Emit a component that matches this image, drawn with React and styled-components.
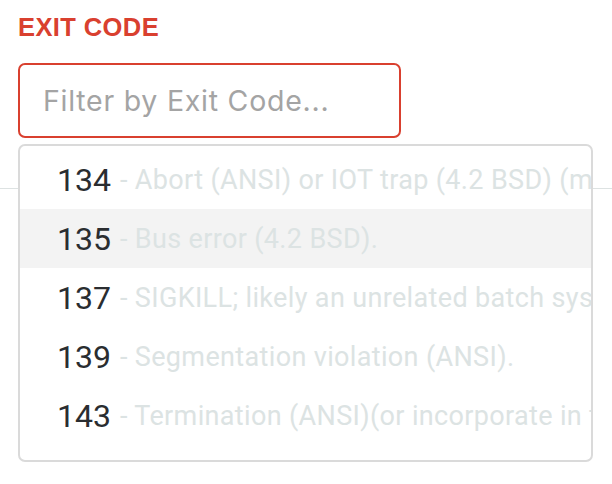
import React from "react";
import styled, { createGlobalStyle } from "styled-components";

const Global = createGlobalStyle`
  html, body { margin: 0; padding: 0; background: #ffffff; }
  body { font-family: "Liberation Sans", Arial, sans-serif; }
  * { box-sizing: border-box; }
`;

const Page = styled.div`
  width: 612px;
  height: 484px;
  overflow: hidden;
  background: #ffffff;
`;

const Field = styled.div`
  display: flex;
  flex-direction: column;
  padding: 12px 0 0 18px;
`;

const Label = styled.label`
  font-family: "Liberation Sans", Arial, sans-serif;
  font-weight: 700;
  font-size: 25.5px;
  line-height: 30px;
  letter-spacing: 0.4px;
  color: #d9402f;
  margin: 0 0 21px 0;
`;

const InputWrap = styled.div`
  position: relative;
  width: 383px;
`;

const Input = styled.input`
  display: block;
  width: 383px;
  height: 75px;
  border: 2px solid #d9402f;
  border-radius: 7px;
  padding: 0 0 0 23px;
  font-family: Inter, "Open Sans", sans-serif;
  font-size: 28.5px;
  letter-spacing: 0.75px;
  color: #333333;
  background: #ffffff;
  outline: none;
  &::placeholder { color: #a4a4a4; }
`;

const Menu = styled.ul`
  position: absolute;
  top: calc(100% + 6px);
  left: 0;
  width: 575px;
  height: 318px;
  margin: 0;
  padding: 4px 0 0 0;
  list-style: none;
  background: #ffffff;
  border: 2px solid #dadada;
  border-radius: 7px;
  overflow: hidden;
  z-index: 2;
`;

const Item = styled.li`
  display: flex;
  align-items: center;
  height: 59px;
  padding: 0 0 0 37px;
  background: ${(p) => (p.$active ? "#f3f3f3" : "transparent")};
  white-space: nowrap;
  overflow: hidden;
  font-family: Roboto, "Liberation Sans", sans-serif;
`;

const Code = styled.span`
  font-size: 32px;
  color: #2a2d30;
  flex: none;
`;

const Desc = styled.span`
  font-size: 27px;
  letter-spacing: 0.35px;
  color: #dce3e3;
  margin-left: 9px;
  flex: none;
`;

const Divider = styled.hr`
  margin: 50px 0 0 0;
  border: 0;
  height: 1px;
  background: #dde2e2;
`;

const codes = [
  { code: "134", desc: "- Abort (ANSI) or IOT trap (4.2 BSD) (most likely a crash)." },
  { code: "135", desc: "- Bus error (4.2 BSD).", active: true },
  { code: "137", desc: "- SIGKILL; likely an unrelated batch system job." },
  { code: "139", desc: "- Segmentation violation (ANSI)." },
  { code: "143", desc: "- Termination (ANSI)(or incorporate in the job)." },
];

export default function App() {
  return (
    <Page>
      <Global />
      <Field>
        <Label>EXIT CODE</Label>
        <InputWrap>
          <Input placeholder="Filter by Exit Code..." />
          <Menu>
            {codes.map((c) => (
              <Item key={c.code} $active={c.active}>
                <Code>{c.code}</Code>
                <Desc>{c.desc}</Desc>
              </Item>
            ))}
          </Menu>
        </InputWrap>
      </Field>
      <Divider />
    </Page>
  );
}
